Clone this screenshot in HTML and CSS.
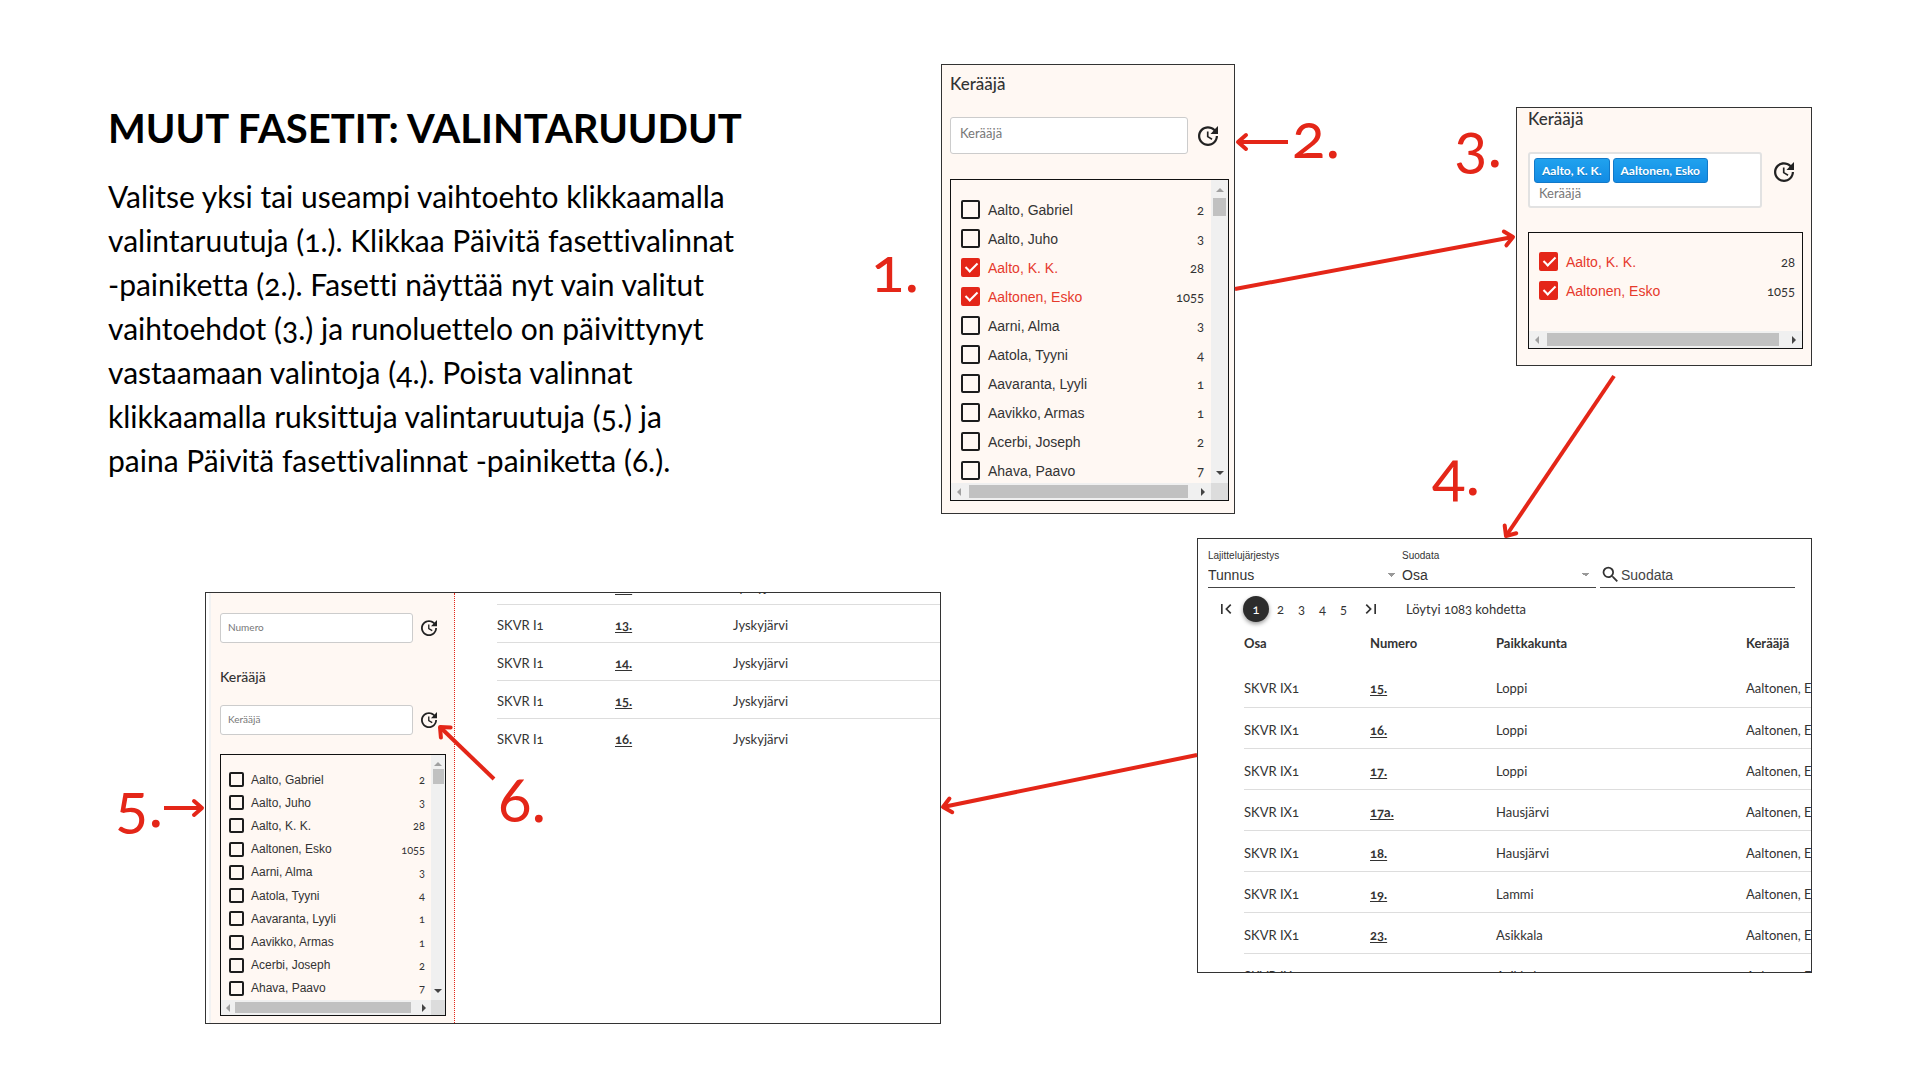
FILE: index.html
```html
<!DOCTYPE html>
<html lang="fi">
<head>
<meta charset="utf-8">
<meta name="viewport" content="width=device-width, initial-scale=1">
<title>Muut fasetit: valintaruudut</title>
<link rel="stylesheet" href="styles.css">
</head>
<body>
<svg class="sprite" aria-hidden="true">
  <symbol id="update" viewBox="3 3 18 18"><path d="M21 10.12h-6.78l2.74-2.82c-2.73-2.7-7.15-2.8-9.88-.1-2.73 2.71-2.73 7.08 0 9.79s7.15 2.71 9.88 0C18.32 15.65 19 14.08 19 12.1h2c0 1.98-.88 4.55-2.64 6.29-3.51 3.48-9.21 3.48-12.72 0-3.5-3.47-3.53-9.11-.02-12.58s9.14-3.47 12.65 0L21 3v7.12zM12.5 8v4.25l3.5 2.08-.72 1.21L11 13V8h1.5z"/></symbol>
  <symbol id="search" viewBox="0 0 24 24"><path d="M15.5 14h-.79l-.28-.27A6.47 6.47 0 0 0 16 9.5 6.5 6.5 0 1 0 9.5 16c1.61 0 3.09-.59 4.23-1.57l.27.28v.79l5 4.99L20.49 19l-4.99-5zm-6 0C7.01 14 5 11.99 5 9.5S7.01 5 9.5 5 14 7.01 14 9.5 11.99 14 9.5 14z"/></symbol>
  <symbol id="first" viewBox="0 0 24 24"><path d="M18.41 16.59L13.82 12l4.59-4.59L17 6l-6 6 6 6zM6 6h2v12H6z"/></symbol>
  <symbol id="last" viewBox="0 0 24 24"><path d="M5.59 7.41L10.18 12l-4.59 4.59L7 18l6-6-6-6zM16 6h2v12h-2z"/></symbol>
</svg>
<main class="slide">
  <section class="intro">
    <h1>MUUT FASETIT: VALINTARUUDUT</h1>
    <p>Valitse yksi tai useampi vaihtoehto klikkaamalla<br>valintaruutuja (1.). Klikkaa Päivitä fasettivalinnat<br>-painiketta (2.). Fasetti näyttää nyt vain valitut<br>vaihtoehdot (3.) ja runoluettelo on päivittynyt<br>vastaamaan valintoja (4.). Poista valinnat<br>klikkaamalla ruksittuja valintaruutuja (5.) ja<br>paina Päivitä fasettivalinnat -painiketta (6.).</p>
  </section>

  <section class="panel facet facet-choose">
    <h2>Kerääjä</h2>
    <div class="search-row">
      <input class="field" type="text" placeholder="Kerääjä" aria-label="Kerääjä">
      <button class="icon-button" type="button" aria-label="Päivitä fasettivalinnat"><svg><use href="#update"/></svg></button>
    </div>
    <div class="list">
      <ul class="options">
        <li><label><input type="checkbox">Aalto, Gabriel</label><span>2</span></li>
        <li><label><input type="checkbox">Aalto, Juho</label><span>3</span></li>
        <li><label><input type="checkbox" checked>Aalto, K. K.</label><span>28</span></li>
        <li><label><input type="checkbox" checked>Aaltonen, Esko</label><span>1055</span></li>
        <li><label><input type="checkbox">Aarni, Alma</label><span>3</span></li>
        <li><label><input type="checkbox">Aatola, Tyyni</label><span>4</span></li>
        <li><label><input type="checkbox">Aavaranta, Lyyli</label><span>1</span></li>
        <li><label><input type="checkbox">Aavikko, Armas</label><span>1</span></li>
        <li><label><input type="checkbox">Acerbi, Joseph</label><span>2</span></li>
        <li><label><input type="checkbox">Ahava, Paavo</label><span>7</span></li>
      </ul>
      <div class="vbar"><i class="up"></i><b></b><i class="down"></i></div>
      <div class="hbar"><i class="left"></i><b></b><i class="right"></i></div>
      <div class="corner"></div>
    </div>
  </section>

  <section class="panel facet facet-chosen">
    <h2>Kerääjä</h2>
    <div class="search-row">
      <div class="field tags">
        <div class="chips"><button class="chip" type="button">Aalto, K. K.</button><button class="chip" type="button">Aaltonen, Esko</button></div>
        <input type="text" placeholder="Kerääjä" aria-label="Kerääjä">
      </div>
      <button class="icon-button" type="button" aria-label="Päivitä fasettivalinnat"><svg><use href="#update"/></svg></button>
    </div>
    <div class="list list-short">
      <ul class="options">
        <li><label><input type="checkbox" checked>Aalto, K. K.</label><span>28</span></li>
        <li><label><input type="checkbox" checked>Aaltonen, Esko</label><span>1055</span></li>
      </ul>
      <div class="hbar"><i class="left"></i><b></b><i class="right"></i></div>
    </div>
  </section>

  <section class="panel results">
    <div class="filters">
      <div class="choice"><label for="sort">Lajittelujärjestys</label><select id="sort"><option>Tunnus</option></select></div>
      <div class="choice"><label for="filter">Suodata</label><select id="filter"><option>Osa</option></select></div>
      <div class="query"><svg><use href="#search"/></svg><input type="text" placeholder="Suodata" aria-label="Suodata"></div>
    </div>
    <nav class="pager">
      <button class="step" type="button" aria-label="Ensimmäinen"><svg><use href="#first"/></svg></button>
      <button class="current" type="button">1</button>
      <button type="button">2</button>
      <button type="button">3</button>
      <button type="button">4</button>
      <button type="button">5</button>
      <button class="step" type="button" aria-label="Viimeinen"><svg><use href="#last"/></svg></button>
      <span>Löytyi 1083 kohdetta</span>
    </nav>
    <table>
      <thead><tr><th>Osa</th><th>Numero</th><th class="place">Paikkakunta</th><th>Kerääjä</th></tr></thead>
      <tbody>
        <tr><td>SKVR IX1</td><td><a href="#">15.</a></td><td>Loppi</td><td>Aaltonen, E</td></tr>
        <tr><td>SKVR IX1</td><td><a href="#">16.</a></td><td>Loppi</td><td>Aaltonen, E</td></tr>
        <tr><td>SKVR IX1</td><td><a href="#">17.</a></td><td>Loppi</td><td>Aaltonen, E</td></tr>
        <tr><td>SKVR IX1</td><td><a href="#">17a.</a></td><td>Hausjärvi</td><td>Aaltonen, E</td></tr>
        <tr><td>SKVR IX1</td><td><a href="#">18.</a></td><td>Hausjärvi</td><td>Aaltonen, E</td></tr>
        <tr><td>SKVR IX1</td><td><a href="#">19.</a></td><td>Lammi</td><td>Aaltonen, E</td></tr>
        <tr><td>SKVR IX1</td><td><a href="#">23.</a></td><td>Asikkala</td><td>Aaltonen, E</td></tr>
        <tr><td>SKVR IX1</td><td></td><td>Asikkala</td><td>Aaltonen, E</td></tr>
      </tbody>
    </table>
  </section>

  <section class="panel cleared">
    <div class="facet facet-small">
      <div class="search-row">
        <input class="field" type="text" placeholder="Numero" aria-label="Numero">
        <button class="icon-button" type="button" aria-label="Päivitä fasettivalinnat"><svg><use href="#update"/></svg></button>
      </div>
      <h2>Kerääjä</h2>
      <div class="search-row">
        <input class="field" type="text" placeholder="Kerääjä" aria-label="Kerääjä">
        <button class="icon-button" type="button" aria-label="Päivitä fasettivalinnat"><svg><use href="#update"/></svg></button>
      </div>
      <div class="list">
        <ul class="options">
          <li><label><input type="checkbox">Aalto, Gabriel</label><span>2</span></li>
          <li><label><input type="checkbox">Aalto, Juho</label><span>3</span></li>
          <li><label><input type="checkbox">Aalto, K. K.</label><span>28</span></li>
          <li><label><input type="checkbox">Aaltonen, Esko</label><span>1055</span></li>
          <li><label><input type="checkbox">Aarni, Alma</label><span>3</span></li>
          <li><label><input type="checkbox">Aatola, Tyyni</label><span>4</span></li>
          <li><label><input type="checkbox">Aavaranta, Lyyli</label><span>1</span></li>
          <li><label><input type="checkbox">Aavikko, Armas</label><span>1</span></li>
          <li><label><input type="checkbox">Acerbi, Joseph</label><span>2</span></li>
          <li><label><input type="checkbox">Ahava, Paavo</label><span>7</span></li>
        </ul>
        <div class="vbar"><i class="up"></i><b></b><i class="down"></i></div>
        <div class="hbar"><i class="left"></i><b></b><i class="right"></i></div>
        <div class="corner"></div>
      </div>
    </div>
    <div class="rows">
      <table>
        <tbody>
          <tr><td>SKVR I1</td><td><a href="#">12.</a></td><td>Jyskyjärvi</td></tr>
          <tr><td>SKVR I1</td><td><a href="#">13.</a></td><td>Jyskyjärvi</td></tr>
          <tr><td>SKVR I1</td><td><a href="#">14.</a></td><td>Jyskyjärvi</td></tr>
          <tr><td>SKVR I1</td><td><a href="#">15.</a></td><td>Jyskyjärvi</td></tr>
          <tr><td>SKVR I1</td><td><a href="#">16.</a></td><td>Jyskyjärvi</td></tr>
        </tbody>
      </table>
    </div>
  </section>

  <svg class="arrows" aria-hidden="true">
    <defs>
      <marker id="head" markerUnits="userSpaceOnUse" markerWidth="24" markerHeight="24" refX="18" refY="12" orient="auto"><path d="M10 5L18 12L10 19"/></marker>
    </defs>
    <path d="M1288 142H1238"/>
    <path d="M1235 289L1513 237"/>
    <path d="M1614 376L1506 536"/>
    <path d="M1197 755L943 807"/>
    <path d="M164 808H202"/>
    <path d="M494 779L440 727"/>
  </svg>
  <span class="step-no n1">1.</span>
  <span class="step-no n2">2.</span>
  <span class="step-no n3">3.</span>
  <span class="step-no n4">4.</span>
  <span class="step-no n5">5.</span>
  <span class="step-no n6">6.</span>
</main>
</body>
</html>
```
FILE: styles.css
```css
* { box-sizing: border-box; }

body {
  margin: 0;
  background: #fff;
  color: #333;
  font-family: Lato, "Open Sans", sans-serif;
  font-variant-numeric: oldstyle-nums;
  font-variant-ligatures: none;
}

button, input, select { font: inherit; color: inherit; margin: 0; }
button { padding: 0; border: 0; background: none; font-variant-numeric: oldstyle-nums; }
h1, h2, p, ul { margin: 0; padding: 0; }
svg { display: block; fill: currentColor; }
.sprite { position: absolute; width: 0; height: 0; }

/* Free canvas that holds the numbered walkthrough */
.slide { position: relative; min-height: 100vh; overflow: hidden; }

.intro { padding: 104px 0 0 108px; color: #000; }
.intro h1 { font-size: 40px; line-height: 48px; font-weight: 700; }
.intro p { margin-top: 22px; font-size: 30px; line-height: 44px; }

.panel {
  position: absolute;
  overflow: hidden;
  border: 1px solid #333;
  background: #fff;
}

/* Facet panels */
.facet { background: #fff8f3; }
.facet h2 { font-size: 17px; line-height: 20px; font-weight: 500; }
.facet-choose { left: 941px; top: 64px; width: 294px; padding: 9px 5px 12px 8px; }
.facet-chosen { left: 1516px; top: 107px; width: 296px; padding: 1px 8px 16px 11px; }

.search-row { display: flex; align-items: center; gap: 10px; margin: 23px 0 25px; padding-right: 11px; }
.field {
  flex: 1;
  min-width: 0;
  height: 37px;
  padding: 0 9px 5px;
  border: 1px solid #ccc;
  border-radius: 3px;
  background: #fff;
  font-size: 13px;
}
.field::placeholder, .field input::placeholder { color: #777; opacity: 1; }
.icon-button { color: #222; }
.icon-button svg { width: 20px; height: 20px; }

.facet-chosen .search-row { align-items: flex-start; gap: 12px; margin: 23px 0 24px; padding-right: 9px; }
.facet-chosen .icon-button { margin-top: 10px; }
.tags { height: 56px; padding: 4px; border: 2px solid #e2e2e2; }
.tags input { width: 100%; height: 20px; padding: 0 5px; border: 0; background: none; font-size: 13px; }
.chips { display: flex; gap: 3px; }
.chip {
  height: 25px;
  padding: 0 7px;
  border: 1px solid #1279c9;
  border-radius: 3px;
  background: linear-gradient(#20a2ee, #128be4);
  color: #fff;
  font-size: 12px;
  font-weight: 700;
  white-space: nowrap;
  text-shadow: 0 1px 0 rgba(0, 51, 83, .3);
}

.list {
  display: grid;
  grid-template: 303px 17px / 1fr 17px;
  border: 1px solid #111;
}
.list-short { grid-template: 98px 17px / 1fr; }

.options { overflow: hidden; padding: 15px 7px 0 10px; list-style: none; font: 14px "Liberation Sans", Arial, sans-serif; }
.options li { display: flex; justify-content: space-between; align-items: center; height: 29px; }
.options label { display: flex; align-items: center; gap: 8px; }
.options span { font-family: Lato, sans-serif; font-size: 13px; font-variant-numeric: oldstyle-nums; }
.options label:has(:checked) { color: #e63a2c; }
.list-short .options { padding-top: 14px; }

input[type="checkbox"] {
  appearance: none;
  position: relative;
  width: 19px;
  height: 19px;
  border: 2px solid #1c1c1c;
  border-radius: 2px;
}
input[type="checkbox"]:checked { border-color: #e42618; background: #e42618; }
input[type="checkbox"]:checked::after {
  content: "";
  position: absolute;
  left: 5px;
  top: 0;
  width: 5px;
  height: 10px;
  border: solid #fff;
  border-width: 0 2px 2px 0;
  transform: rotate(45deg);
}

.vbar, .hbar { display: flex; align-items: center; background: #f0f0f0; }
.vbar { flex-direction: column; padding: 8px 0; }
.hbar { padding: 0 6px; }
.vbar b { width: 13px; height: 18px; margin: 6px 0 auto; background: #c1c1c1; }
.hbar b { flex: 1; height: 13px; margin: 0 13px 0 8px; background: #c1c1c1; }
.corner { background: #dcdcdc; }
.up, .down { border: solid transparent; border-width: 0 4px; }
.up { border-bottom: 4px solid #a0a0a0; }
.down { border-top: 4px solid #444; }
.left, .right { border: solid transparent; border-width: 4px 0; }
.left { border-right: 4px solid #a0a0a0; }
.right { border-left: 4px solid #444; }

/* Result list after filtering */
.results { left: 1197px; top: 538px; width: 615px; height: 435px; padding-left: 10px; font-size: 13px; }
.filters { display: grid; grid-template-columns: 194px 194px 199px; align-items: end; padding-top: 11px; font-family: "Liberation Sans", Arial, sans-serif; font-size: 14px; }
.choice { border-bottom: 1px solid #444; }
.choice label { display: block; font-size: 10px; line-height: 12px; }
.choice select {
  appearance: none;
  width: 100%;
  height: 25px;
  padding: 0;
  border: 0;
  border-radius: 0;
  background: linear-gradient(135deg, #999 50%, transparent 50%) right 6px center / 4px 4px no-repeat,
              linear-gradient(225deg, #999 50%, transparent 50%) right 10px center / 4px 4px no-repeat;
}
.query { display: flex; align-items: center; margin-left: 4px; height: 26px; border-bottom: 1px solid #444; }
.query svg { width: 21px; height: 21px; }
.query input { flex: 1; min-width: 0; padding: 0; border: 0; background: none; }
.query input::placeholder { color: #444; opacity: 1; }

.pager { display: flex; align-items: center; height: 42px; padding-left: 8px; }
.pager button { width: 21px; text-align: center; }
.pager .step { width: 20px; }
.pager .step svg { width: 20px; height: 20px; }
.pager .step:last-of-type { margin: 0 25px 0 7px; }
.pager .current {
  width: 26px;
  height: 26px;
  margin: 0 1px 0 7px;
  border-radius: 50%;
  background: #2c2c2c;
  box-shadow: 0 2px 4px rgba(0, 0, 0, .4);
  color: #fff;
}

table { border-collapse: collapse; table-layout: fixed; }
td, th { padding: 0; text-align: left; white-space: nowrap; }
td { padding-top: 4px; border-bottom: 1px solid #ddd; }
td a { color: #333; font-weight: 700; text-underline-offset: 2px; }
.results table { width: 578px; margin-left: 36px; }
.results th { width: 126px; height: 26px; }
.results .place { width: 250px; }
.results th:last-child { width: auto; }
.results td { height: 41px; }
.results thead::after { content: ""; display: block; height: 10px; }

/* Facet and list after clearing */
.cleared { left: 205px; top: 592px; width: 736px; height: 432px; display: flex; padding-left: 3px; }
.facet-small { width: 246px; padding: 20px 8px 0 9px; border-left: 2px solid #f2f2f2; border-right: 1px dotted #e42618; }
.facet-small h2 { font-size: 14px; }
.facet-small .search-row { gap: 8px; margin: 0 0 24px; padding-right: 9px; }
.facet-small .search-row + .list { margin-top: 19px; }
.facet-small h2 + .search-row { margin: 18px 0 0; }
.facet-small .field { height: 30px; padding: 0 7px 3px; font-size: 10px; }
.facet-small .icon-button svg { width: 16px; height: 16px; }
.facet-small .list { grid-template: 245px 15px / 1fr 14px; }
.facet-small .options { display: flex; flex-direction: column; justify-content: space-between; padding: 13px 6px 0 8px; font-size: 12px; }
.facet-small .options li { height: 23px; }
.facet-small .options label { gap: 7px; }
.facet-small .options span { font-size: 11px; }
.facet-small input[type="checkbox"] { width: 15px; height: 15px; }
.facet-small .vbar b { width: 11px; height: 15px; margin-top: 3px; }
.facet-small .vbar { padding: 7px 0; }
.facet-small .hbar { padding: 0 5px; }
.facet-small .hbar b { height: 11px; margin: 0 11px 0 5px; }

.rows { flex: 1; min-width: 0; padding-left: 42px; font-size: 13px; }
.rows table { width: 100%; margin-top: -27px; }
.rows td { width: 118px; height: 38px; }
.rows td:last-child { width: auto; }
.rows tr:last-child td { border-bottom: 0; }

/* Annotations */
.arrows { position: absolute; inset: 0; width: 100%; height: 100%; fill: none; stroke: #e42618; stroke-width: 4; pointer-events: none; }
.arrows > path { marker-end: url(#head); }
.arrows marker path { stroke-linecap: round; stroke-linejoin: round; }
.step-no { position: absolute; color: #e42618; font-size: 62px; line-height: 64px; }
.n1 { left: 871px; top: 236px; }
.n2 { left: 1292px; top: 102px; }
.n3 { left: 1454px; top: 111px; }
.n4 { left: 1432px; top: 439px; }
.n5 { left: 115px; top: 771px; }
.n6 { left: 498px; top: 766px; }
```
